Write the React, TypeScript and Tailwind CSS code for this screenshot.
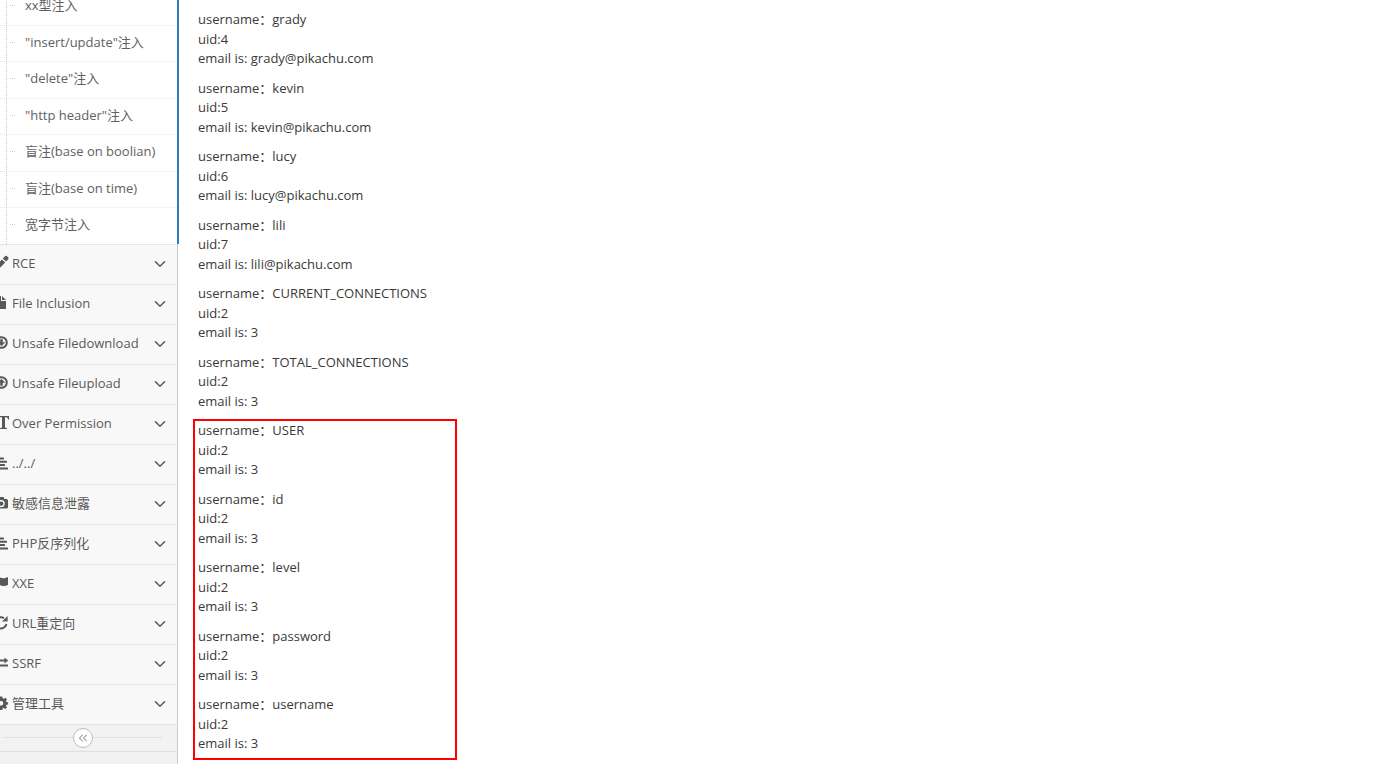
import React from 'react';
import { ChevronDown, ChevronsLeft } from 'lucide-react';

const subItems = [
  'xx型注入',
  '"insert/update"注入',
  '"delete"注入',
  '"http header"注入',
  '盲注(base on boolian)',
  '盲注(base on time)',
  '宽字节注入',
];

const alignLeft = (
  <>
    <rect x="-8" y="-5.5" width="12" height="2" rx="0.5" />
    <rect x="-8" y="-2.2" width="15" height="2" rx="0.5" />
    <rect x="-8" y="1.1" width="13" height="2" rx="0.5" />
    <rect x="-8" y="4.4" width="16" height="2" rx="0.5" />
  </>
);

const menuItems = [
  {
    label: 'RCE',
    icon: <path d="M-5.5 4 2-3.6 5.2-.4-2.3 7.2-6 7.6ZM2.9-4.6 5.2-6.9Q6-7.5 6.8-6.9L8.2-5.4Q8.8-4.6 8.2-3.8L6.1-1.4Z" />,
  },
  {
    label: 'File Inclusion',
    icon: <path d="M-6-7H1V-2H6V6H-6ZM2-7 6-3H2Z" />,
  },
  {
    label: 'Unsafe Filedownload',
    icon: (
      <>
        <circle cx="1.5" cy="-0.5" r="5.3" fill="none" stroke="currentColor" strokeWidth="2" />
        <path d="M.2-3.8H2.8V-.8H5.2L1.5 3.2-2.2-.8H.2Z" />
      </>
    ),
  },
  {
    label: 'Unsafe Fileupload',
    icon: (
      <>
        <circle cx="1.5" cy="-0.5" r="5.3" fill="none" stroke="currentColor" strokeWidth="2" />
        <path d="M.2 2.8H2.8V-.2H5.2L1.5-4.2-2.2-.2H.2Z" />
      </>
    ),
  },
  {
    label: 'Over Permission',
    icon: <path d="M-2-7H9V-3.5H8Q7.8-5.5 6.6-5.7H5V4Q5 5 7 5.2V6H0V5.2Q2 5 2 4V-5.7H.4Q-.8-5.5-1-3.5H-2Z" />,
  },
  { label: '../../', icon: alignLeft },
  {
    label: '敏感信息泄露',
    icon: (
      <>
        <path fillRule="evenodd" d="M-6-4H-3.5L-2.5-6H3.5L4.5-4H6.5Q8-4 8-2.5V4Q8 5.5 6.5 5.5H-6Q-8 5.5-8 4V-2.5Q-8-4-6-4ZM1.2-3A3.6 3.6 0 1 0 1.2 4.2 3.6 3.6 0 1 0 1.2-3Z" />
        <circle cx="1.2" cy="0.6" r="2.2" />
      </>
    ),
  },
  { label: 'PHP反序列化', icon: alignLeft },
  {
    label: 'XXE',
    icon: <path d="M-8-6H-6.5V7H-8ZM-6-4.5C-3-6.5-1-6 1-5.2 3-4.4 5-4.8 8-6V2C5 3.4 3 3.4 1 2.4-1 1.4-3 1.4-6 3Z" />,
  },
  {
    label: 'URL重定向',
    icon: (
      <>
        <path d="M6.4 1A5.6 5.6 0 1 1 4-4.8" fill="none" stroke="currentColor" strokeWidth="2" />
        <path d="M7.6-7V-1.5H2Z" />
      </>
    ),
  },
  {
    label: 'SSRF',
    icon: <path d="M-8-3.4H4.5V-5.4L8.2-2.4 4.5.4V-1.6H-8ZM8 1.6V3.4H-4.5V5.4L-8 2.5-4.5-.3V1.6Z" />,
  },
  {
    label: '管理工具',
    icon: (
      <path
        fillRule="evenodd"
        d="M-.3-6.5H2.3L2.7-4.7 3.8-4.2 5.4-5.2 7-3.6 6-2 6.5-.9 8.1-.6V1.4L6.5 1.7 6 2.9 7 4.4 5.4 6 3.8 5 2.7 5.5 2.3 7H-.3L-.7 5.5-1.8 5-3.4 6-5 4.4-4 2.9-4.5 1.7-6.1 1.4V-.6L-4.5-.9-4-2-5-3.6-3.4-5.2-1.8-4.2-.7-4.7ZM1-2A2.3 2.3 0 1 0 1 2.6 2.3 2.3 0 1 0 1-2Z"
      />
    ),
  },
];

const records = [
  { username: 'grady', uid: 4, email: 'grady@pikachu.com' },
  { username: 'kevin', uid: 5, email: 'kevin@pikachu.com' },
  { username: 'lucy', uid: 6, email: 'lucy@pikachu.com' },
  { username: 'lili', uid: 7, email: 'lili@pikachu.com' },
  { username: 'CURRENT_CONNECTIONS', uid: 2, email: '3' },
  { username: 'TOTAL_CONNECTIONS', uid: 2, email: '3' },
];

const highlighted = ['USER', 'id', 'level', 'password', 'username'];

const Entry = ({ username, uid, email }: { username: string; uid: number; email: string }) => (
  <p>
    username：{username}
    <br />
    uid:{uid}
    <br />
    email is: {email}
  </p>
);

const Sidebar = () => (
  <nav className="w-[178px] shrink-0 border-r border-[#cccccc] bg-[#f2f2f2] text-[#585858]">
    <div className="relative -mr-0.5 border-r-2 border-[#2b7dbc]">
      <ul className="-mt-3 bg-white text-[#616161]">
        {subItems.map((item) => (
          <li key={item} className="border-t border-dotted border-[#e8e8e8]">
            <a href="#" className="flex items-center gap-[10px] pt-[7px] pb-[9px] pl-[10px]">
              <span className="w-[5px] border-t border-dotted border-[#b4cde0]" />
              {item}
            </a>
          </li>
        ))}
      </ul>
      <span className="absolute inset-y-0 left-[6px] border-l border-dotted border-[#b4cde0]" />
    </div>

    <ul className="border-b border-[#e5e5e5] bg-[#f8f8f8]">
      {menuItems.map(({ label, icon }) => (
        <li key={label} className="border-t border-[#e5e5e5]">
          <a href="#" className="flex h-[39px] items-center pr-2">
            <svg viewBox="-8 -8 16 16" className="-ml-2 mr-1 mb-[2px] size-4 shrink-0 overflow-visible" fill="currentColor">
              {icon}
            </svg>
            <span className="grow">{label}</span>
            <ChevronDown size={18} />
          </a>
        </li>
      ))}
    </ul>

    <div className="flex items-center border-b border-[#e0e0e0] pt-[3px] pr-[15px] pb-[3px] pl-[3px]">
      <span className="grow border-t border-[#e0e0e0]" />
      <button
        type="button"
        aria-label="Collapse sidebar"
        className="flex size-5 items-center justify-center rounded-full border border-[#bbbbbb] bg-white text-[#aaaaaa]"
      >
        <ChevronsLeft size={14} className="shrink-0" />
      </button>
      <span className="grow border-t border-[#e0e0e0]" />
    </div>
  </nav>
);

const App = () => {
  return (
    <div className="flex h-screen overflow-hidden bg-white font-['Open_Sans','Noto_Sans_CJK_SC',sans-serif] text-[13px] leading-normal text-[#393939]">
      <Sidebar />
      <main className="grow pt-[10px] pl-[15px]">
        <div className="flex flex-col gap-[10px] px-[5px] pb-2">
          {records.map((record) => (
            <Entry key={record.username} {...record} />
          ))}
        </div>
        <div className="flex w-[264px] flex-col gap-[10px] border-2 border-[#ff0000] px-[3px] pb-1">
          {highlighted.map((name) => (
            <Entry key={name} username={name} uid={2} email="3" />
          ))}
        </div>
      </main>
    </div>
  );
};

export default App;
